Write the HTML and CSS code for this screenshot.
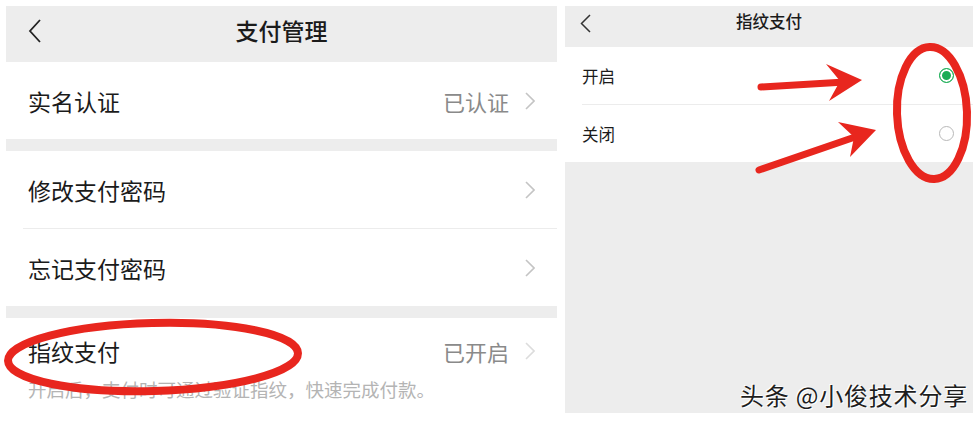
FILE: index.html
```html
<!DOCTYPE html>
<html lang="zh-CN">
<head>
    <meta charset="UTF-8">
    <meta name="viewport" content="width=device-width, initial-scale=1.0">
    <title>支付管理 / 指纹支付</title>
    <link rel="stylesheet" href="styles.css">
</head>
<body>
    <div class="shots">
        <div class="phone left">
            <div class="nav">
                <svg class="back" width="14" height="24" viewBox="0 0 14 24"><polyline points="12,1 2,12 12,23" fill="none" stroke="#222" stroke-width="1.8"/></svg>
                <div class="nav-title">支付管理</div>
            </div>
            <div class="group">
                <div class="row">
                    <span class="label">实名认证</span>
                    <span class="value">已认证</span>
                    <svg class="arrow" width="10" height="18" viewBox="0 0 10 18"><polyline points="1,1 9,9 1,17" fill="none" stroke="#c4c4c4" stroke-width="1.6"/></svg>
                </div>
            </div>
            <div class="gap"></div>
            <div class="group">
                <div class="row">
                    <span class="label">修改支付密码</span>
                    <svg class="arrow" width="10" height="18" viewBox="0 0 10 18"><polyline points="1,1 9,9 1,17" fill="none" stroke="#c4c4c4" stroke-width="1.6"/></svg>
                </div>
                <div class="divider"></div>
                <div class="row">
                    <span class="label">忘记支付密码</span>
                    <svg class="arrow" width="10" height="18" viewBox="0 0 10 18"><polyline points="1,1 9,9 1,17" fill="none" stroke="#c4c4c4" stroke-width="1.6"/></svg>
                </div>
            </div>
            <div class="gap"></div>
            <div class="group grow">
                <div class="row short">
                    <span class="label">指纹支付</span>
                    <span class="value">已开启</span>
                    <svg class="arrow" width="10" height="18" viewBox="0 0 10 18"><polyline points="1,1 9,9 1,17" fill="none" stroke="#dcdcdc" stroke-width="1.6"/></svg>
                </div>
                <div class="tip">开启后，支付时可通过验证指纹，快速完成付款。</div>
            </div>
        </div>

        <div class="phone right">
            <div class="nav small">
                <svg class="back" width="11" height="19" viewBox="0 0 11 19"><polyline points="10,1 1.5,9.5 10,18" fill="none" stroke="#333" stroke-width="1.5"/></svg>
                <div class="nav-title">指纹支付</div>
            </div>
            <div class="group">
                <div class="option">
                    <span>开启</span>
                    <span class="radio on"></span>
                </div>
                <div class="divider"></div>
                <div class="option">
                    <span>关闭</span>
                    <span class="radio"></span>
                </div>
            </div>
        </div>
    </div>

    <svg class="marks" width="980" height="421" viewBox="0 0 980 421">
        <g fill="none" stroke="#e8261e" stroke-width="8">
            <ellipse cx="153" cy="357" rx="145" ry="34" transform="rotate(-1.5 153 357)"/>
            <ellipse cx="932" cy="113" rx="35" ry="66" transform="rotate(-2 932 113)"/>
        </g>
        <g stroke="#e8261e" stroke-width="7" stroke-linecap="round">
            <line x1="761" y1="87" x2="845" y2="82"/>
            <line x1="759" y1="170" x2="858" y2="136"/>
        </g>
        <g fill="#e8261e">
            <polygon points="862,80 826,64 840,81 829,101"/>
            <polygon points="876,130 838,122 854,137 850,157"/>
        </g>
    </svg>

    <div class="watermark">头条 @小俊技术分享</div>
</body>
</html>
```

FILE: styles.css
```css
body {
    margin: 0;
    background-color: #ffffff;
    font-family: "Noto Sans CJK SC", "Noto Sans", sans-serif;
    color: #1b1b1b;
    width: 980px;
    height: 421px;
    overflow: hidden;
    position: relative;
}
.shots {
    display: flex;
    gap: 8px;
    padding: 6px 0 0 6px;
}
.phone {
    display: flex;
    flex-direction: column;
}
.phone.left {
    width: 551px;
    height: 415px;
}
.phone.right {
    width: 408px;
    height: 407px;
    background-color: #ededed;
}
.nav {
    height: 56px;
    background-color: #ededed;
    display: flex;
    align-items: center;
    position: relative;
}
.nav .back {
    margin-left: 22px;
    margin-top: -6px;
}
.nav-title {
    position: absolute;
    left: 0;
    right: 0;
    top: 0;
    text-align: center;
    font-size: 23px;
    font-weight: 500;
    line-height: 48px;
}
.nav.small {
    height: 41px;
}
.nav.small .back {
    margin-left: 15px;
    margin-top: -6px;
}
.nav.small .nav-title {
    font-size: 16.5px;
    line-height: 36px;
    top: -3px;
}
.group {
    background-color: #ffffff;
}
.group.grow {
    flex: 1;
}
.gap {
    height: 12px;
    background-color: #ededed;
}
.row {
    height: 77px;
    display: flex;
    align-items: center;
    padding: 0 22px;
    font-size: 23px;
}
.row.short {
    height: 66px;
}
.row .label {
    flex: 1;
}
.row .value {
    color: #8a8a8a;
    font-size: 22px;
    margin-right: 16px;
}
.divider {
    height: 1px;
    background-color: #ececec;
    margin-left: 17px;
}
.tip {
    font-size: 18.5px;
    color: #b4b4b4;
    padding: 0 22px;
    margin-top: -8px;
}
.option {
    height: 57px;
    display: flex;
    align-items: center;
    justify-content: space-between;
    padding: 0 19px 0 17px;
    font-size: 16.5px;
}
.radio {
    width: 15px;
    height: 15px;
    border: 1.5px solid #b8b8b8;
    border-radius: 50%;
    box-sizing: border-box;
}
.radio.on {
    border-color: #1aad55;
    background-color: #1aad55;
    box-shadow: inset 0 0 0 2px #ffffff;
}
.marks {
    position: absolute;
    left: 0;
    top: 0;
}
.watermark {
    position: absolute;
    right: 12px;
    bottom: 9px;
    font-size: 24px;
    color: #1e1e1e;
    text-shadow: 1px 1px 0 #ffffff, -1px -1px 0 #ffffff;
    letter-spacing: 0.8px;
}
```
